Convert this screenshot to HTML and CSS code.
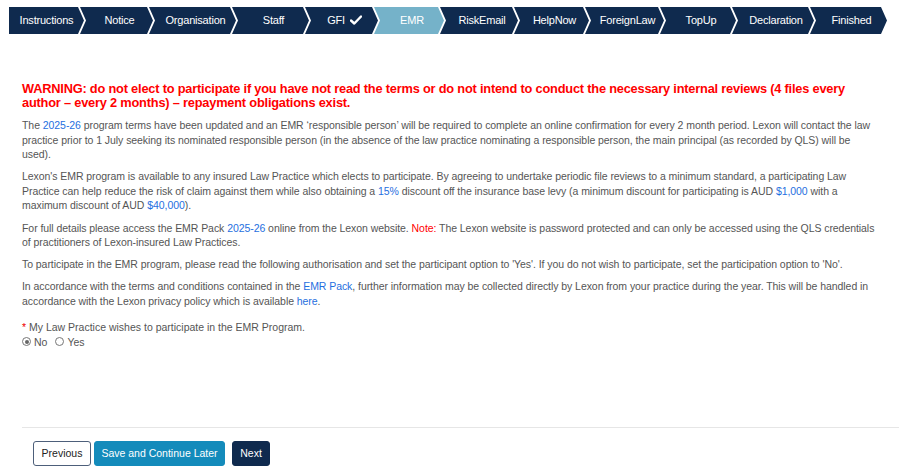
FILE: index.html
```html
<!DOCTYPE html>
<html lang="en">
<head>
<meta charset="utf-8">
<title>EMR</title>
<link rel="stylesheet" href="styles.css">
</head>
<body>
<nav class="steps">
  <div class="step s1 first">Instructions</div>
  <div class="step s2">Notice</div>
  <div class="step s3">Organisation</div>
  <div class="step s4">Staff</div>
  <div class="step s5">GFI <svg class="tick" viewBox="0 0 12 10" width="12" height="10"><path d="M1 5.5 L4.3 8.5 L11 1.5" fill="none" stroke="#fff" stroke-width="2.4" stroke-linecap="round" stroke-linejoin="round"/></svg></div>
  <div class="step s6 active">EMR</div>
  <div class="step s7">RiskEmail</div>
  <div class="step s8">HelpNow</div>
  <div class="step s9">ForeignLaw</div>
  <div class="step s10">TopUp</div>
  <div class="step s11">Declaration</div>
  <div class="step s12">Finished</div>
</nav>

<main class="content">
  <h2 class="warning">WARNING: do not elect to participate if you have not read the terms or do not intend to conduct the necessary internal reviews (4 files every<br>author – every 2 months) – repayment obligations exist.</h2>

  <p>The <a href="#">2025-26</a> program terms have been updated and an EMR ‘responsible person’ will be required to complete an online confirmation for every 2 month period. Lexon will contact the law practice prior to 1 July seeking its nominated responsible person (in the absence of the law practice nominating a responsible person, the main principal (as recorded by QLS) will be used).</p>

  <p>Lexon's EMR program is available to any insured Law Practice which elects to participate. By agreeing to undertake periodic file reviews to a minimum standard, a participating Law Practice can help reduce the risk of claim against them while also obtaining a <a href="#">15%</a> discount off the insurance base levy (a minimum discount for participating is AUD <a href="#">$1,000</a> with a maximum discount of AUD <a href="#">$40,000</a>).</p>

  <p>For full details please access the EMR Pack <a href="#">2025-26</a> online from the Lexon website. <span class="note">Note:</span> The Lexon website is password protected and can only be accessed using the QLS credentials of practitioners of Lexon-insured Law Practices.</p>

  <p>To participate in the EMR program, please read the following authorisation and set the participant option to 'Yes'. If you do not wish to participate, set the participation option to 'No'.</p>

  <p>In accordance with the terms and conditions contained in the <a href="#">EMR Pack</a>, further information may be collected directly by Lexon from your practice during the year. This will be handled in accordance with the Lexon privacy policy which is available <a href="#">here</a>.</p>

  <div class="question">
    <div class="q-label"><span class="req">*</span> My Law Practice wishes to participate in the EMR Program.</div>
    <div class="options">
      <label class="opt"><span class="radio checked"></span>No</label>
      <label class="opt"><span class="radio"></span>Yes</label>
    </div>
  </div>
</main>

<footer class="actions">
  <div class="btns">
    <button class="btn btn-prev">Previous</button>
    <button class="btn btn-save">Save and Continue Later</button>
    <button class="btn btn-next">Next</button>
  </div>
</footer>
</body>
</html>
```

FILE: styles.css
```css
html, body {
  margin: 0;
  padding: 0;
  background: #fff;
}
body {
  font-family: "Liberation Sans", Arial, sans-serif;
  width: 899px;
  height: 474px;
  overflow: hidden;
}

.steps {
  display: flex;
  margin: 7px 0 0 9px;
  height: 27px;
}
.step {
  flex: 0 0 auto;
  height: 27px;
  display: flex;
  align-items: center;
  justify-content: center;
  background: #0f2a4e;
  color: #fff;
  font-size: 11px;
  letter-spacing: -0.2px;
  padding-left: 6px;
  padding-bottom: 1px;
  box-sizing: border-box;
  margin-left: -4px;
  clip-path: polygon(0 0, calc(100% - 6px) 0, 100% 50%, calc(100% - 6px) 100%, 0 100%, 6px 50%);
}
.step.first {
  margin-left: 0;
  padding-left: 0;
  clip-path: polygon(0 0, calc(100% - 6px) 0, 100% 50%, calc(100% - 6px) 100%, 0 100%);
}
.step.active {
  background: #75b2c9;
}
.tick { margin-left: 5px; }
.s1 { width: 75px; }
.s2 { width: 73px; }
.s3 { width: 87px; }
.s4 { width: 77px; }
.s5 { width: 73px; }
.s6 { width: 70px; }
.s7 { width: 78px; }
.s8 { width: 75px; }
.s9 { width: 79px; }
.s10 { width: 76px; }
.s11 { width: 82px; }
.s12 { width: 77px; }

.content {
  padding: 0 22px;
  margin-top: 48px;
}
.warning {
  color: #f00;
  font-size: 12.8px;
  line-height: 14px;
  letter-spacing: -0.2px;
  font-weight: bold;
  margin: 0 0 8px;
}
.content p {
  color: #555;
  font-size: 10.5px;
  line-height: 14.6px;
  letter-spacing: -0.06px;
  margin: 0 0 7.5px;
}
.content a {
  color: #1f6fe0;
  text-decoration: none;
}
.note { color: #f00; }

.question {
  margin-top: 11px;
  color: #555;
  font-size: 10.5px;
}
.q-label { line-height: 14px; }
.req { color: #e00; }
.options {
  display: flex;
  gap: 8px;
  margin-top: 1px;
  line-height: 14px;
}
.opt {
  display: flex;
  align-items: center;
  gap: 3px;
}
.radio {
  width: 7px;
  height: 7px;
  border: 1px solid #777;
  border-radius: 50%;
  box-sizing: content-box;
  position: relative;
  background: #fff;
}
.radio.checked::after {
  content: "";
  position: absolute;
  left: 1.5px;
  top: 1.5px;
  width: 4px;
  height: 4px;
  border-radius: 50%;
  background: #666;
}

.actions {
  margin: 78px 0 0 22px;
  border-top: 1px solid #e6e6e6;
  padding: 13px 0 0 11px;
}
.btns {
  display: flex;
  gap: 3px;
}
.btn {
  font-family: "Liberation Sans", Arial, sans-serif;
  font-size: 10.5px;
  height: 25px;
  border-radius: 3px;
  padding: 0;
  white-space: nowrap;
  box-sizing: border-box;
  cursor: pointer;
}
.btn-prev {
  width: 58px;
  background: #fff;
  border: 1px solid #4d5f7a;
  color: #222;
}
.btn-save {
  width: 131px;
  background: #148bbb;
  border: 1px solid #148bbb;
  color: #fff;
}
.btn-next {
  width: 38px;
  margin-left: 4px;
  background: #0f2a4e;
  border: 1px solid #0f2a4e;
  color: #fff;
}
```
